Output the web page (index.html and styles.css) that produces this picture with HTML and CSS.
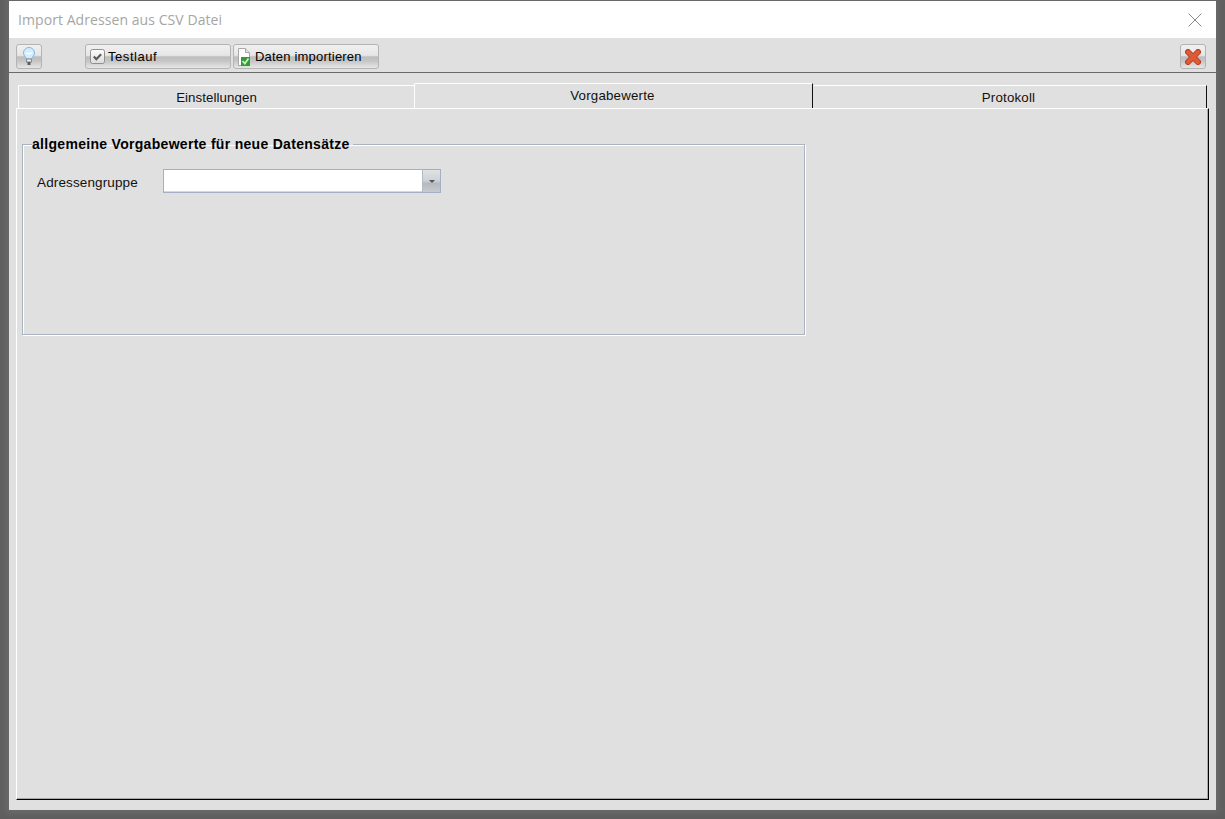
FILE: index.html
```html
<!DOCTYPE html>
<html lang="de">
<head>
<meta charset="utf-8">
<title>Import Adressen aus CSV Datei</title>
<link rel="stylesheet" href="styles.css">
</head>
<body>
<div class="window">
  <header class="titlebar">
    <span class="title">Import Adressen aus CSV Datei</span>
    <svg class="win-close" width="14" height="14" viewBox="0 0 14 14"><path d="M.5.5l13 13M13.500.5l-13 13" stroke="#8a8a8a" stroke-width="1" fill="none"/></svg>
  </header>
  <div class="toolbar">
    <button class="btn btn-icon">
      <svg width="12" height="19" viewBox="0 0 12 19"><path d="M6 .5a5.500 5.500 0 0 0-5.500 5.500c0 2.500 2 3.500 2.800 6h5.400c.8-2.500 2.800-3.500 2.800-6A5.500 5.500 0 0 0 6 .5z" fill="#d6ecfd" stroke="#7fb6e6"/><path d="M3 5.500c.6 1.500 5.400 1.500 6 0" fill="none" stroke="#fff" stroke-width="1.200"/><rect x="3.500" y="12" width="5" height="3" fill="#e8e8e8" stroke="#7a7a7a" stroke-width=".8"/><rect x="4.500" y="15" width="3" height="3" fill="#5c5c5c"/></svg>
    </button>
    <button class="btn btn-wide btn-first">
      <svg width="15" height="15" viewBox="0 0 15 15"><defs><linearGradient id="chk" x1="0" y1="0" x2="0" y2="1"><stop offset="0" stop-color="#fdfdfd"/><stop offset="1" stop-color="#dcdcdc"/></linearGradient></defs><rect x=".5" y=".5" width="14" height="14" rx="2" fill="url(#chk)" stroke="#8f8f8f"/><path d="M3.800 7.500l2.500 2.700 4.800-5" fill="none" stroke="#5a5a5a" stroke-width="2.200"/></svg>
      <span class="btn-label-wide">Testlauf</span>
    </button>
    <button class="btn btn-wide btn-import">
      <svg width="13" height="18" viewBox="0 0 13 18"><path d="M.5.500h7l4 4v13h-11z" fill="#fff" stroke="#a8a8a8"/><path d="M7.500.500v4h4" fill="#e4e4e4" stroke="#a8a8a8"/><path d="M3 9h9v9H3z" fill="#2f9e38"/><path d="M4.500 13l2.300 2.500 3.700-5" fill="none" stroke="#c9f2bd" stroke-width="1.800"/></svg>
      <span>Daten importieren</span>
    </button>
    <button class="btn btn-icon btn-end">
      <svg width="16" height="16" viewBox="0 0 16 16"><path d="M3 3l10 10M13 3L3 13" stroke="#b93e22" stroke-width="6" stroke-linecap="round" fill="none"/><path d="M3 3l10 10M13 3L3 13" stroke="#dc5a36" stroke-width="4" stroke-linecap="round" fill="none"/></svg>
    </button>
  </div>
  <main class="content">
    <nav class="tabs">
      <div class="tab tab-first">Einstellungen</div>
      <div class="tab tab-active">Vorgabewerte</div>
      <div class="tab tab-last">Protokoll</div>
    </nav>
    <section class="pane">
      <fieldset class="group">
        <legend class="group-title">allgemeine Vorgabewerte für neue Datensätze</legend>
        <div class="field">
          <label class="field-label">Adressengruppe</label>
          <div class="combo">
            <div class="combo-input"></div>
            <div class="combo-arrow"><span class="caret"></span></div>
          </div>
        </div>
      </fieldset>
    </section>
  </main>
</div>
</body>
</html>
```

FILE: styles.css
```css
* { box-sizing: border-box; }
html, body { margin: 0; height: 100%; overflow: hidden; }
body {
  background: #5f5f5f;
  font-family: "Liberation Sans", Arial, sans-serif;
  padding: 1px 0 0 9px;
}
.window {
  width: 1207px;
  height: 809px;
  background: #e0e0e0;
  display: flex;
  flex-direction: column;
  box-shadow: 0 0 6px 3px #6b6b6b;
}
.titlebar {
  height: 37px;
  background: #fff;
  display: flex;
  align-items: center;
  justify-content: space-between;
  padding: 0 14px 0 9px;
  flex: none;
}
.title {
  font-family: "Open Sans", "Liberation Sans", sans-serif;
  font-size: 14px;
  letter-spacing: .07px;
  color: #a6a6a2;
}
.win-close { display: block; }
.toolbar {
  height: 35px;
  flex: none;
  display: flex;
  align-items: flex-start;
  padding: 6px 10px 0 7px;
  border-bottom: 1px solid #6a6a6a;
}
.btn {
  height: 25px;
  padding: 0;
  border: 1px solid #b4b4b4;
  border-radius: 3px;
  background: linear-gradient(#f0f0f0 0, #e6e6e6 45%, #bdbdbd 52%, #c6c6c6 70%, #e6e6e6 100%);
  display: flex;
  align-items: center;
  font-family: "Liberation Sans", Arial, sans-serif;
  font-size: 13px;
  letter-spacing: .2px;
  color: #000;
}
.btn-icon { width: 26px; justify-content: center; }
.btn-wide { width: 146px; padding-left: 4px; gap: 3px; margin-right: 2px; }
.btn-first { margin-left: 43px; }
.btn-import { gap: 4px; }
.btn-label-wide { letter-spacing: .55px; }
.btn-end { margin-left: auto; }
.content {
  flex: 1;
  display: flex;
  flex-direction: column;
  padding: 10px 7px 10px 7px;
  min-height: 0;
}
.tabs {
  display: flex;
  align-items: flex-end;
  height: 25px;
  flex: none;
  padding-left: 2px;
  padding-right: 2px;
}
.tab {
  height: 23px;
  display: flex;
  align-items: center;
  justify-content: center;
  font-size: 13.300px;
  letter-spacing: .2px;
  color: #111;
  border-top: 1px solid #fff;
  border-left: 1px solid #fff;
  border-top-left-radius: 2px;
  padding-top: 1px;
}
.tab-first { width: 396px; letter-spacing: .07px; }
.tab-active {
  width: 399px;
  height: 25px;
  border-right: 1px solid #111;
  padding-bottom: 3px;
  padding-right: 2px;
}
.tab-last { width: 394px; border-right: 1px solid #111; border-left: none; padding-right: 2px; }
.pane {
  flex: 1;
  border-top: 1px solid #fff;
  border-left: 1px solid #fff;
  border-right: 1px solid #000;
  border-bottom: 1px solid #000;
  box-shadow: inset -1px -1px 0 #a8a8a8;
  padding: 27px 0 0 5px;
  min-height: 0;
}
.group {
  width: 783px;
  height: 199px;
  margin: 0;
  padding: 0 0 0 14px;
  border: 1px solid #aab4c0;
  box-shadow: 1px 1px 0 #fff, inset 1px 1px 0 #fff;
  min-width: 0;
}
.group-title {
  font-size: 14px;
  font-weight: bold;
  letter-spacing: .3px;
  color: #000;
  padding: 0 3px 0 0;
  margin-left: -5px;
  line-height: 16px;
}
.field {
  display: flex;
  align-items: center;
  margin-top: 17px;
}
.field-label {
  width: 126px;
  font-size: 13.500px;
  letter-spacing: .13px;
  color: #111;
  position: relative;
  top: 1px;
}
.combo {
  width: 278px;
  height: 24px;
  display: flex;
  border: 1px solid #a4afc4;
  background: #fff;
}
.combo-input {
  flex: 1;
  background: #fff;
  border-bottom: 1px solid #d8d8d8;
}
.combo-arrow {
  width: 18px;
  display: flex;
  align-items: center;
  justify-content: center;
  background: linear-gradient(#dfe2e5 0, #cdd1d5 50%, #b4bac0 60%, #c6cbd0 100%);
  border-left: 1px solid #b6bcc6;
}
.caret {
  width: 0;
  height: 0;
  border-left: 3.500px solid transparent;
  border-right: 3.500px solid transparent;
  border-top: 3px solid #555;
}
```
